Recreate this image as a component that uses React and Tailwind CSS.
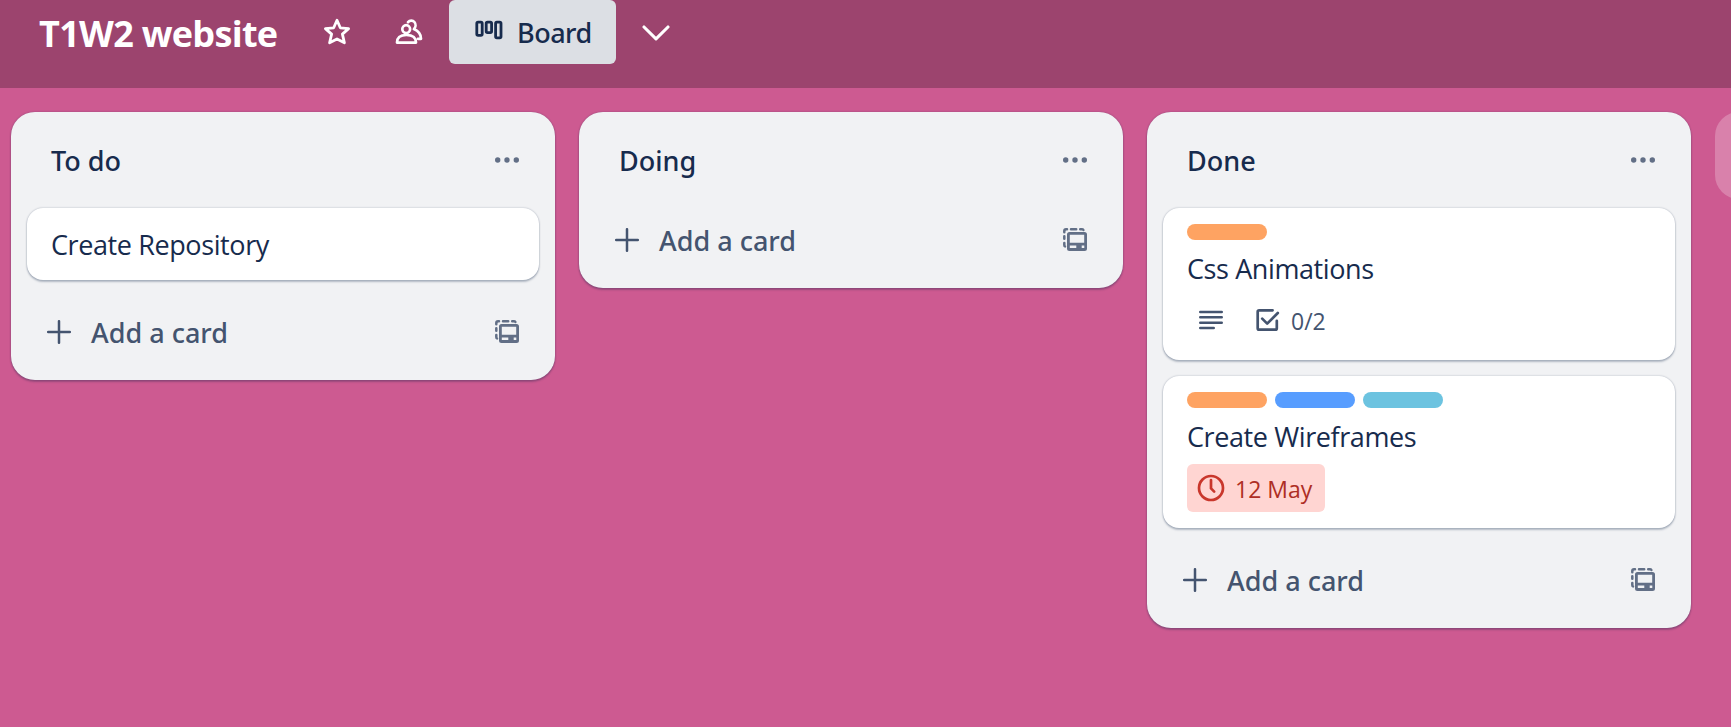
import React from "react";

const StarIcon = () => (
  <svg width="28" height="28" viewBox="0 0 28 28" fill="none" stroke="currentColor" strokeWidth="2.8" strokeLinejoin="round">
    <path d="M14 2.3 L17.3 9.8 L25.6 10.6 L19.4 16.1 L21.4 24.8 L14 21 L6.6 24.8 L8.6 16.1 L2.4 10.6 L10.7 9.8 Z" />
  </svg>
);

const MembersIcon = () => (
  <svg width="28" height="28" viewBox="0 0 28 28" fill="none" stroke="currentColor" strokeWidth="2.7" strokeLinejoin="round" strokeLinecap="round">
    <circle cx="11.2" cy="11.1" r="3.9" />
    <path d="M2 24.6 C2 19.4 5.8 17 11.4 17 C17 17 21 19.4 21 24.6 Z" />
    <path d="M13 4.2 C14.8 2.1 17.8 2.1 19.4 4 C21.2 6.2 20.8 9.2 18.9 11.1 C23.2 13 26 16.2 26 20.8 L23 20.8" />
  </svg>
);

const BoardIcon = () => (
  <svg width="28" height="20" viewBox="0 0 28 20" fill="none" stroke="currentColor" strokeWidth="2.8">
    <rect x="1.8" y="2.2" width="5.4" height="13.2" rx="1.3" />
    <rect x="11.2" y="2.2" width="5.4" height="10.4" rx="1.3" />
    <rect x="20.6" y="2.2" width="5.4" height="15.6" rx="1.3" />
  </svg>
);

const ChevronIcon = () => (
  <svg width="28" height="16" viewBox="0 0 28 16" fill="none" stroke="currentColor" strokeWidth="3.1" strokeLinecap="round" strokeLinejoin="round">
    <path d="M2 2 L14 13.8 L26 2" />
  </svg>
);

const DotsIcon = () => (
  <svg width="24" height="6" viewBox="0 0 24 6" fill="currentColor">
    <circle cx="2.7" cy="3" r="2.7" />
    <circle cx="12" cy="3" r="2.7" />
    <circle cx="21.3" cy="3" r="2.7" />
  </svg>
);

const PlusIcon = () => (
  <svg width="24" height="24" viewBox="0 0 24 24" fill="none" stroke="currentColor" strokeWidth="2.5" strokeLinecap="round">
    <path d="M12 1.2 V22.8 M1.2 12 H22.8" />
  </svg>
);

const TemplateIcon = () => (
  <svg width="24" height="24" viewBox="0 0 24 24">
    <path
      fill="currentColor"
      fillRule="evenodd"
      d="M6.5 4 H21.5 A2.5 2.5 0 0 1 24 6.5 V20.5 A2.5 2.5 0 0 1 21.5 23 H6.5 A2.5 2.5 0 0 1 4 20.5 V6.5 A2.5 2.5 0 0 1 6.5 4 Z M6.8 6.7 V14.8 H21.2 V6.7 Z M6.8 17.4 V20 H13.3 V17.4 Z M18.7 17.4 V20 H21.3 V17.4 Z"
    />
    <path
      d="M1.3 4.2 V3 Q1.3 1.3 3 1.3 H4 M8 1.3 H13.2 M17.2 1.3 H18.8 Q20 1.3 20.4 2 M1.3 8.2 V10.8 M1.3 15 V17 Q1.3 18.2 2 18.4"
      fill="none"
      stroke="currentColor"
      strokeWidth="2.5"
      strokeLinecap="round"
    />
  </svg>
);

const DescriptionIcon = () => (
  <svg width="24" height="20" viewBox="0 0 24 20" fill="none" stroke="currentColor" strokeWidth="2.6" strokeLinecap="round">
    <path d="M1.3 2 H22.7 M1.3 7.3 H22.7 M1.3 12.7 H22.7 M1.3 18 H14.7" />
  </svg>
);

const ChecklistIcon = () => (
  <svg width="24" height="24" viewBox="0 0 24 24" fill="none" stroke="currentColor" strokeWidth="2.7" strokeLinecap="round" strokeLinejoin="round">
    <path d="M16.6 2.3 H3.2 Q1.7 2.3 1.7 3.8 V20.2 Q1.7 21.7 3.2 21.7 H19.3 Q20.8 21.7 20.8 20.2 V12.8" />
    <path d="M6.2 10.6 L11.2 15.6 L21.8 5" />
  </svg>
);

const ClockIcon = () => (
  <svg width="28" height="28" viewBox="0 0 28 28" fill="none" stroke="currentColor" strokeWidth="2.7" strokeLinecap="round" strokeLinejoin="round">
    <circle cx="14" cy="14" r="12" />
    <path d="M14 6 V14.4 L17.2 17.6" />
  </svg>
);

const Card = ({ title, labels, children }) => (
  <article className="flex flex-col gap-2 rounded-2xl bg-white px-6 py-4 shadow-[0_2px_2px_#091e4240,0_0_2px_#091e424f]">
    {labels && (
      <div className="flex gap-2">
        {labels.map((color) => (
          <span key={color} className={`h-4 w-20 rounded-full ${color}`} />
        ))}
      </div>
    )}
    <h3 className="h-10 text-[27px] leading-[42px] tracking-[-0.4px] whitespace-nowrap text-[#172b4d]">{title}</h3>
    {children}
  </article>
);

const Column = ({ title, children }) => (
  <section className="w-[544px] shrink-0 rounded-3xl bg-[#f1f2f4] px-4 shadow-[0_2px_2px_#091e4240,0_0_2px_#091e424f]">
    <header className="flex h-[76px] items-center justify-between pt-5 pr-5 pl-6 text-[#626f86]">
      <h2 className="h-10 font-['Noto_Sans',sans-serif] text-[27px] leading-[42px] font-medium text-[#172b4d]">{title}</h2>
      <DotsIcon />
    </header>
    {children && <div className="flex flex-col gap-4 pt-5">{children}</div>}
    <footer className="flex h-[100px] items-center pt-1 pr-5 pl-5 text-[#44546f]">
      <PlusIcon />
      <span className="ml-5 h-10 font-['Noto_Sans',sans-serif] text-[27px] leading-[42px] font-medium">Add a card</span>
      <span className="ml-auto text-[#626f86]">
        <TemplateIcon />
      </span>
    </footer>
  </section>
);

export default function App() {
  return (
    <div className="flex h-[727px] w-full flex-col overflow-hidden bg-[#cd5a91] font-['Open_Sans','Noto_Sans',sans-serif]">
      <nav className="flex h-[88px] shrink-0 items-start bg-[#9c446e] pl-[39px] text-white">
        <div className="flex h-16 items-center">
          <h1 className="w-[284px] pt-1 text-[36px] leading-[48px] font-bold tracking-[-0.7px] whitespace-nowrap">T1W2 website</h1>
          <span className="w-[72px]">
            <StarIcon />
          </span>
          <span className="w-[54px]">
            <MembersIcon />
          </span>
          <button className="flex h-16 w-[167px] items-center rounded-md bg-[#dcdfe4] pl-[26px] text-[#172b4d]">
            <span className="pb-1">
              <BoardIcon />
            </span>
            <span className="ml-[14px] pt-0.5 font-['Noto_Sans',sans-serif] text-[27px] leading-10 font-medium tracking-[-0.5px]">Board</span>
          </button>
          <span className="ml-[26px] pt-0.5">
            <ChevronIcon />
          </span>
        </div>
      </nav>
      <main className="flex items-start gap-6 pt-6 pl-[11px]">
        <Column title="To do">
          <Card title="Create Repository" />
        </Column>
        <Column title="Doing" />
        <Column title="Done">
          <Card title="Css Animations" labels={["bg-[#fea362]"]}>
            <div className="flex h-12 items-center pl-3 text-[#44546f]">
              <DescriptionIcon />
              <span className="ml-[33px]">
                <ChecklistIcon />
              </span>
              <span className="ml-[11px] h-10 text-[23px] leading-[42px]">0/2</span>
            </div>
          </Card>
          <Card title="Create Wireframes" labels={["bg-[#fea362]", "bg-[#579dff]", "bg-[#6cc3e0]"]}>
            <div className="flex h-12 w-[138px] items-center rounded-md bg-[#ffd5d2] pl-2.5 whitespace-nowrap text-[#ae2e24]">
              <span className="text-[#c9372c]">
                <ClockIcon />
              </span>
              <span className="ml-2.5 h-10 text-[23px] leading-[42px]">12 May</span>
            </div>
          </Card>
        </Column>
        <div className="h-[87px] w-[544px] shrink-0 rounded-3xl bg-white/24" />
      </main>
    </div>
  );
}
